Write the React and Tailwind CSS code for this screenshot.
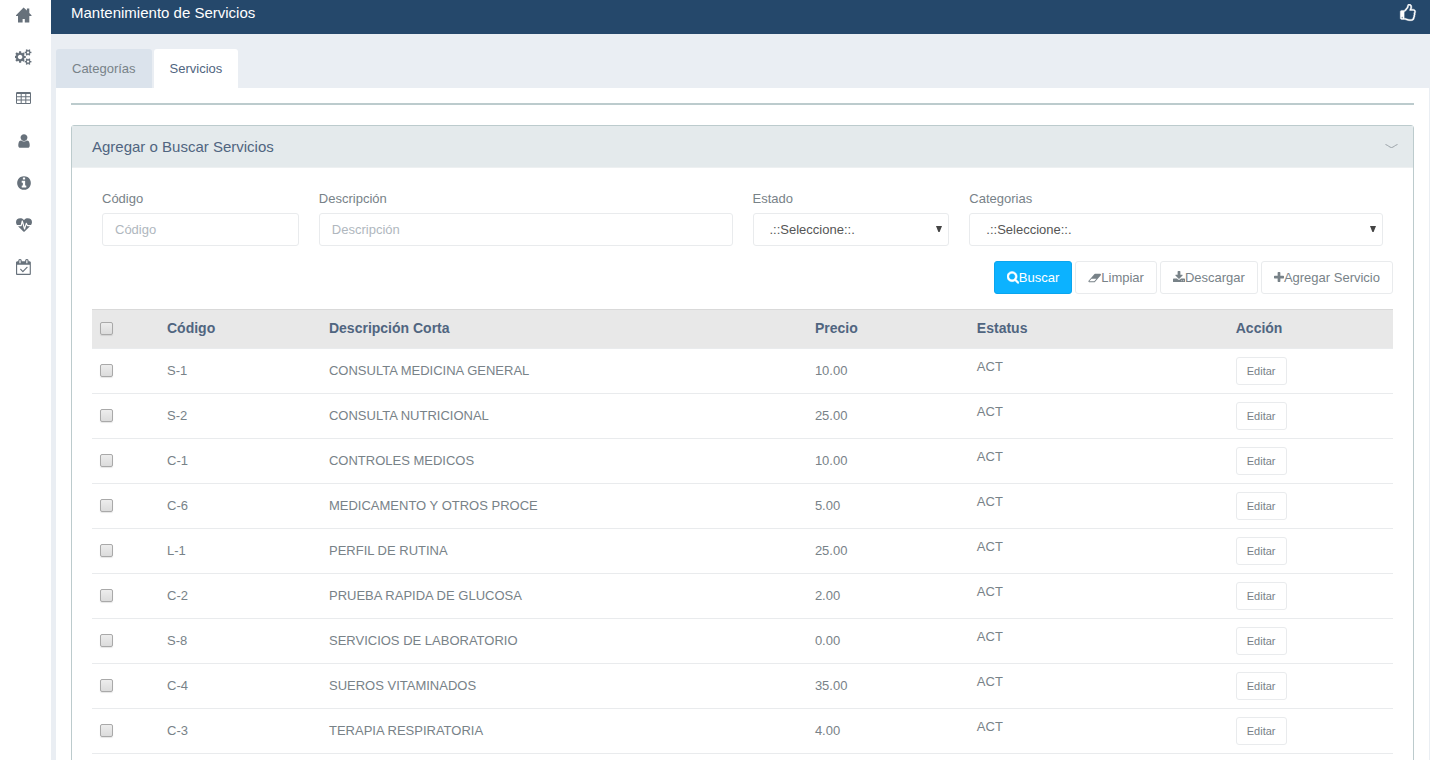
import React from "react";

const ICONS = {
  home: ["0 0 16 16", "M7.600 .5L0 8.200v.9h2V15.500h4.600V12h2.200v3.500H13.300V9.100H15.500v-.9L13.300 5.900V1.500H10.900v2z"],
  cogs: ["0 0 1920 1792", "M832 896q0-106-75-181t-181-75-181 75-75 181 75 181 181 75 181-75 75-181zm768 512q0-52-38-90t-90-38-90 38-38 90q0 53 37.5 90.5t90.5 37.5 90.5-37.5 37.5-90.5zm0-1024q0-52-38-90t-90-38-90 38-38 90q0 53 37.5 90.5t90.5 37.5 90.5-37.5 37.5-90.5zm-384 421v185q0 10-7 19.5t-16 10.5l-155 24q-11 35-32 76 34 48 90 115 7 11 7 20 0 12-7 19-23 30-82.5 89.5t-78.5 59.5q-11 0-21-7l-115-90q-37 19-77 31-11 108-23 155-7 24-30 24h-186q-11 0-20-7.5t-10-17.5l-23-153q-34-10-75-31l-118 89q-7 7-20 7-11 0-21-8-144-133-144-160 0-9 7-19 10-14 41-53t47-61q-23-44-35-82l-152-24q-10-1-17-9.5t-7-19.5v-185q0-10 7-19.5t16-10.5l155-24q11-35 32-76-34-48-90-115-7-11-7-20 0-12 7-20 22-30 82-89t79-59q11 0 21 7l115 90q34-18 77-32 11-108 23-154 7-24 30-24h186q11 0 20 7.5t10 17.5l23 153q34 10 75 31l118-89q8-7 20-7 11 0 21 8 144 133 144 160 0 8-7 19-12 16-42 54t-45 60q23 48 34 82l152 23q10 2 17 10.5t7 19.5zm640 533v140q0 16-149 31-12 27-30 52 51 113 51 138 0 4-4 7-122 71-124 71-8 0-46-47t-52-68q-20 2-30 2t-30-2q-14 21-52 68t-46 47q-2 0-124-71-4-3-4-7 0-25 51-138-18-25-30-52-149-15-149-31v-140q0-16 149-31 13-29 30-52-51-113-51-138 0-4 4-7 4-2 35-20t59-34 30-16q8 0 46 46.5t52 67.5q20-2 30-2t30 2q51-71 92-112l6-2q4 0 124 70 4 3 4 7 0 25-51 138 17 23 30 52 149 15 149 31zm0-1024v140q0 16-149 31-12 27-30 52 51 113 51 138 0 4-4 7-122 71-124 71-8 0-46-47t-52-68q-20 2-30 2t-30-2q-14 21-52 68t-46 47q-2 0-124-71-4-3-4-7 0-25 51-138-18-25-30-52-149-15-149-31v-140q0-16 149-31 13-29 30-52-51-113-51-138 0-4 4-7 4-2 35-20t59-34 30-16q8 0 46 46.5t52 67.5q20-2 30-2t30 2q51-71 92-112l6-2q4 0 124 70 4 3 4 7 0 25-51 138 17 23 30 52 149 15 149 31z"],
  table: ["0 0 16 16", "M1.200 1h12.600q1.200 0 1.200 1.200v9.600q0 1.200-1.200 1.200H1.200Q0 13 0 11.800V2.200Q0 1 1.200 1zM1 3v2.300h3.700V3zM5.700 3v2.300h3.600V3zM10.300 3v2.300h3.700V3zM1 6.300v2.300h3.700V6.300zM5.700 6.300v2.300h3.600V6.300zM10.300 6.300v2.300h3.700V6.300zM1 9.600V12h3.700V9.600zM5.700 9.600V12h3.600V9.600zM10.300 9.600V12h3.700V9.600z"],
  user: ["0 0 1792 1792", "M1536 1399q0 109-62.5 187t-150.5 78h-854q-88 0-150.5-78t-62.5-187q0-85 8.5-160.5t31.5-152 58.5-131 94-89 134.5-34.5q131 128 313 128t313-128q76 0 134.5 34.5t94 89 58.5 131 31.5 152 8.5 160.5zm-256-887q0 159-112.5 271.5t-271.5 112.5-271.5-112.5-112.5-271.5 112.5-271.5 271.5-112.5 271.5 112.5 112.5 271.5z"],
  info: ["0 0 1792 1792", "M1152 1376v-160q0-14-9-23t-23-9h-96v-512q0-14-9-23t-23-9h-320q-14 0-23 9t-9 23v160q0 14 9 23t23 9h96v320h-96q-14 0-23 9t-9 23v160q0 14 9 23t23 9h448q14 0 23-9t9-23zm-128-896v-160q0-14-9-23t-23-9h-192q-14 0-23 9t-9 23v160q0 14 9 23t23 9h192q14 0 23-9t9-23zm640 416q0 209-103 385.5t-279.5 279.5-385.5 103-385.5-103-279.5-279.5-103-385.5 103-385.5 279.5-279.5 385.5-103 385.5 103 279.5 279.5 103 385.5z"],
  heartbeat: ["0 0 1792 1792", "M1280 1024h305q-5 6-10 10.5t-9 7.5l-3 4-623 600q-18 18-44 18t-44-18l-624-602q-5-2-21-20h369q22 0 39.5-13.5t22.5-34.5l70-281 190 667q6 20 23 33t39 13q21 0 38-13t23-33l146-485 56 112q18 35 57 35zm512-428q0 145-103 300h-369l-111-221q-8-17-25.5-27t-36.5-8q-45 5-56 46l-129 430-196-686q-6-20-23.5-33t-39.5-13-39 13.5-22 34.5l-116 464h-423q-103-155-103-300 0-220 127-344t351-124q62 0 126.5 21.5t120 58 95.5 68.5 76 68q36-36 76-68t95.5-68.5 120-58 126.5-21.5q224 0 351 124t127 344z"],
  calendar: ["0 0 1792 1792", "M1303 964l-512 512q-10 9-23 9t-23-9l-288-288q-9-10-9-23t9-22l46-46q9-9 22-9t23 9l220 220 444-444q10-9 23-9t22 9l46 46q9 9 9 22t-9 23zm-1175 700h1408v-1024h-1408v1024zm384-1216v-288q0-14-9-23t-23-9h-64q-14 0-23 9t-9 23v288q0 14 9 23t23 9h64q14 0 23-9t9-23zm768 0v-288q0-14-9-23t-23-9h-64q-14 0-23 9t-9 23v288q0 14 9 23t23 9h64q14 0 23-9t9-23zm384-64v1280q0 52-38 90t-90 38h-1408q-52 0-90-38t-38-90v-1280q0-52 38-90t90-38h128v-96q0-66 47-113t113-47h64q66 0 113 47t47 113v96h384v-96q0-66 47-113t113-47h64q66 0 113 47t47 113v96h128q52 0 90 38t38 90z"],
  thumb: ["0 0 1792 1792", "M384 1344q0-26-19-45t-45-19-45 19-19 45 19 45 45 19 45-19 19-45zm1152-576q0-51-39-89.5t-89-38.5h-352q0-58 48-159.5t48-160.5q0-98-32-145t-128-47q-26 26-38 85t-30.5 125.5-59.5 109.5q-22 23-77 91-4 5-23 30t-31.5 41-34.5 42.5-40 44-38.5 35.5-40 27-35.5 9h-32v640h32q13 0 31.5 3t33 6.5 38 11 35 11.5 35.5 12.5 29 10.5q211 73 342 73h121q192 0 192-167 0-26-5-56 30-16 47.5-52.5t17.5-73.5-18-69q53-50 53-119 0-25-10-55.5t-25-47.5q32-1 53.5-47t21.5-81zm128-1q0 89-49 163 9 33 9 69 0 77-38 144 3 21 3 43 0 101-60 178 1 139-85 219.5t-227 80.5h-129q-96 0-189.5-22.5t-216.5-65.5q-116-40-138-40h-288q-53 0-90.5-37.5t-37.5-90.5v-640q0-53 37.5-90.5t90.5-37.5h274q36-24 137-155 58-75 107-128 24-25 35.5-85.5t30.5-126.5 62-108q39-37 90-37 84 0 151 32.5t102 101.5 35 186q0 93-48 192h176q104 0 180 76t76 179z"],
  search: ["64 64 1664 1792", "M1216 832q0-185-131.5-316.5t-316.5-131.5-316.5 131.5-131.5 316.5 131.5 316.5 316.5 131.5 316.5-131.5 131.5-316.5zm512 832q0 52-38 90t-90 38q-54 0-90-38l-343-342q-179 124-399 124-143 0-273.5-55.5t-225-150-150-225-55.5-273.5 55.5-273.5 150-225 225-150 273.5-55.5 273.5 55.5 225 150 150 225 55.5 273.5q0 220-124 399l343 343q37 37 37 90z"],
  eraser: ["0 0 1984 1792", "M960 1408l336-384h-768l-336 384h768zm1013-1077q15 34 9.5 71.5t-30.5 65.5l-896 1024q-38 44-96 44h-768q-38 0-69.5-20.5t-47.5-54.5q-15-34-9.5-71.5t30.5-65.5l896-1024q38-44 96-44h768q38 0 69.5 20.5t47.5 54.5z"],
  download: ["64 0 1664 1792", "M1344 1344q0-26-19-45t-45-19-45 19-19 45 19 45 45 19 45-19 19-45zm256 0q0-26-19-45t-45-19-45 19-19 45 19 45 45 19 45-19 19-45zm128-224v320q0 40-28 68t-68 28h-1472q-40 0-68-28t-28-68v-320q0-40 28-68t68-28h465l135 136q58 56 136 56t136-56l136-136h464q40 0 68 28t28 68zm-325-569q17 41-14 70l-448 448q-18 19-45 19t-45-19l-448-448q-31-29-14-70 17-39 59-39h256v-448q0-26 19-45t45-19h256q26 0 45 19t19 45v448h256q42 0 59 39z"],
  plus: ["192 0 1408 1792", "M1600 736v192q0 40-28 68t-68 28h-416v416q0 40-28 68t-68 28h-192q-40 0-68-28t-28-68v-416h-416q-40 0-68-28t-28-68v-192q0-40 28-68t68-28h416v-416q0-40 28-68t68-28h192q40 0 68 28t28 68v416h416q40 0 68 28t28 68z"],
};

function Icon({ name, className }) {
  const [viewBox, d] = ICONS[name];
  return (
    <svg viewBox={viewBox} className={`shrink-0 fill-current ${className}`} aria-hidden="true">
      <path fillRule="evenodd" d={d} />
    </svg>
  );
}

const NAV = [
  ["home", "Inicio"],
  ["cogs", "Configuración"],
  ["table", "Tablas"],
  ["user", "Usuarios"],
  ["info", "Información"],
  ["heartbeat", "Salud"],
  ["calendar", "Citas"],
];

const ROWS = [
  ["S-1", "CONSULTA MEDICINA GENERAL", "10.00"],
  ["S-2", "CONSULTA NUTRICIONAL", "25.00"],
  ["C-1", "CONTROLES MEDICOS", "10.00"],
  ["C-6", "MEDICAMENTO Y OTROS PROCE", "5.00"],
  ["L-1", "PERFIL DE RUTINA", "25.00"],
  ["C-2", "PRUEBA RAPIDA DE GLUCOSA", "2.00"],
  ["S-8", "SERVICIOS DE LABORATORIO", "0.00"],
  ["C-4", "SUEROS VITAMINADOS", "35.00"],
  ["C-3", "TERAPIA RESPIRATORIA", "4.00"],
];

function TextField({ id, label, className }) {
  return (
    <div className={`px-[10px] ${className}`}>
      <label htmlFor={id} className="mb-1 block">{label}</label>
      <input
        id={id}
        type="text"
        placeholder={label}
        className="block h-[33px] w-full rounded-[3px] border border-[#e9ebed] bg-white px-3 text-[#555] placeholder:text-[#b0b7be]"
      />
    </div>
  );
}

function SelectField({ id, label, className }) {
  return (
    <div className={`px-[10px] ${className}`}>
      <label htmlFor={id} className="mb-1 block">{label}</label>
      <div className="relative">
        <select
          id={id}
          className="block h-[33px] w-full appearance-none rounded-[3px] border border-[#e9ebed] bg-white pl-4 pr-5 text-[#555]"
        >
          <option>.::Seleccione::.</option>
        </select>
        <svg viewBox="0 0 6 6" className="pointer-events-none absolute right-[7px] top-[13px] size-[6px] fill-[#444]" aria-hidden="true">
          <path d="M0 0h6L3.600 6H2.400z" />
        </svg>
      </div>
    </div>
  );
}

function ToolButton({ icon, iconClass, primary, children }) {
  const tone = primary
    ? "border-[#0aa5ee] bg-[#0cb2ff] text-white"
    : "border-[#e9ebed] bg-white text-[#788288]";
  return (
    <button type="button" className={`flex h-[33px] items-center rounded-[3px] border px-3 ${tone}`}>
      <Icon name={icon} className={iconClass} />
      {children}
    </button>
  );
}

function Check({ label }) {
  return (
    <input
      type="checkbox"
      aria-label={label}
      className="block size-[13px] appearance-none rounded-[2px] border border-[#a9a9a9] bg-linear-to-b from-[#ededed] to-[#dcdcdc] shadow-[0_1px_1px_rgba(0,0,0,0.1)] checked:bg-[#788288]"
    />
  );
}

export default function App() {
  return (
    <div className="flex h-screen overflow-hidden bg-[#eaeef3] font-['Liberation_Sans',Arial,sans-serif] text-[13px] leading-5 text-[#788288]">
      <nav className="flex w-[51px] shrink-0 flex-col items-center gap-[26px] bg-white pr-1 pt-[7px] text-[#67717b]">
        {NAV.map(([icon, label]) => (
          <a key={icon} href={`#${icon}`} aria-label={label} className="flex h-4 w-5 items-center justify-center">
            <Icon name={icon} className={icon === "cogs" ? "h-4 w-[17px]" : "size-4"} />
          </a>
        ))}
      </nav>

      <div className="flex min-w-0 flex-1 flex-col">
        <header className="flex h-[34px] shrink-0 items-center justify-between bg-[#25486b] pb-2 pl-5 pr-[13px] text-white">
          <h1 className="text-[15px]">Mantenimiento de Servicios</h1>
          <button type="button" aria-label="Me gusta">
            <Icon name="thumb" className="size-[18px] stroke-current [stroke-width:40]" />
          </button>
        </header>

        <main className="flex min-h-0 flex-1 flex-col pl-[5px] pr-px pt-[15px]">
          <div className="flex gap-0.5">
            <button type="button" className="h-[39px] rounded-t-[3px] bg-[#dbe3ec] px-4">Categorías</button>
            <button type="button" className="h-[39px] rounded-t-[3px] bg-white px-4 text-[#506580]">Servicios</button>
          </div>

          <div className="flex-1 overflow-hidden bg-white p-[15px]">
            <hr className="mb-5 border-t-2 border-[#bccbcd]" />

            <section className="rounded-[3px] border border-[#bccbcd]">
              <div className="flex h-[42px] items-center justify-between border-b border-[#edf0f1] bg-[#e4eaec] pl-5 pr-[15px]">
                <h2 className="text-[15px] text-[#506580]">Agregar o Buscar Servicios</h2>
                <button type="button" aria-label="Contraer">
                  <svg viewBox="0 0 13 5" className="h-[5px] w-[13px] fill-none stroke-[#9aa2a8]" aria-hidden="true">
                    <path d="M.5 .5C3 1.100 4.500 3.500 6.500 3.500S10 1.100 12.500 .5" />
                  </svg>
                </button>
              </div>

              <div className="px-5 pb-5 pt-[21px]">
                <form>
                  <div className="mb-[15px] grid grid-cols-12">
                    <TextField id="codigo" label="Código" className="col-span-2" />
                    <TextField id="descripcion" label="Descripción" className="col-span-4" />
                    <SelectField id="estado" label="Estado" className="col-span-2" />
                    <SelectField id="categorias" label="Categorias" className="col-span-4" />
                  </div>
                  <div className="mb-[15px] flex justify-end gap-[3px]">
                    <ToolButton primary icon="search" iconClass="h-[13px] w-3 stroke-current [stroke-width:70]">Buscar</ToolButton>
                    <ToolButton icon="eraser" iconClass="h-3 w-[13px]">Limpiar</ToolButton>
                    <ToolButton icon="download" iconClass="h-[13px] w-3">Descargar</ToolButton>
                    <ToolButton icon="plus" iconClass="h-[13px] w-[10px]">Agregar Servicio</ToolButton>
                  </div>
                </form>

                <table className="w-full table-fixed border-collapse text-left">
                  <thead>
                    <tr className="h-[39px] border-y border-t-[#d9d9d9] border-b-[#e9ebed] bg-[#e8e8e8] text-sm text-[#506580]">
                      <th className="w-[67px] px-2 pb-0.5"><Check label="Seleccionar todos" /></th>
                      <th className="w-[12.45%] px-2 pb-0.5">Código</th>
                      <th className="w-[37.35%] px-2 pb-0.5">Descripción Corta</th>
                      <th className="w-[12.45%] px-2 pb-0.5">Precio</th>
                      <th className="w-[19.9%] px-2 pb-0.5">Estatus</th>
                      <th className="px-2 pb-0.5">Acción</th>
                    </tr>
                  </thead>
                  <tbody>
                    {ROWS.map(([code, name, price]) => (
                      <tr key={code} className="h-[45px] border-b border-[#e9ebed]">
                        <td className="px-2 pb-0.5"><Check label={`Seleccionar ${code}`} /></td>
                        <td className="px-2">{code}</td>
                        <td className="px-2">{name}</td>
                        <td className="px-2">{price}</td>
                        <td className="px-2 pt-2 align-top">ACT</td>
                        <td className="px-2">
                          <button type="button" className="block h-7 rounded-[3px] border border-[#e9ebed] bg-white px-[10px] text-[11px]">
                            Editar
                          </button>
                        </td>
                      </tr>
                    ))}
                  </tbody>
                </table>
              </div>
            </section>
          </div>
        </main>
      </div>
    </div>
  );
}
